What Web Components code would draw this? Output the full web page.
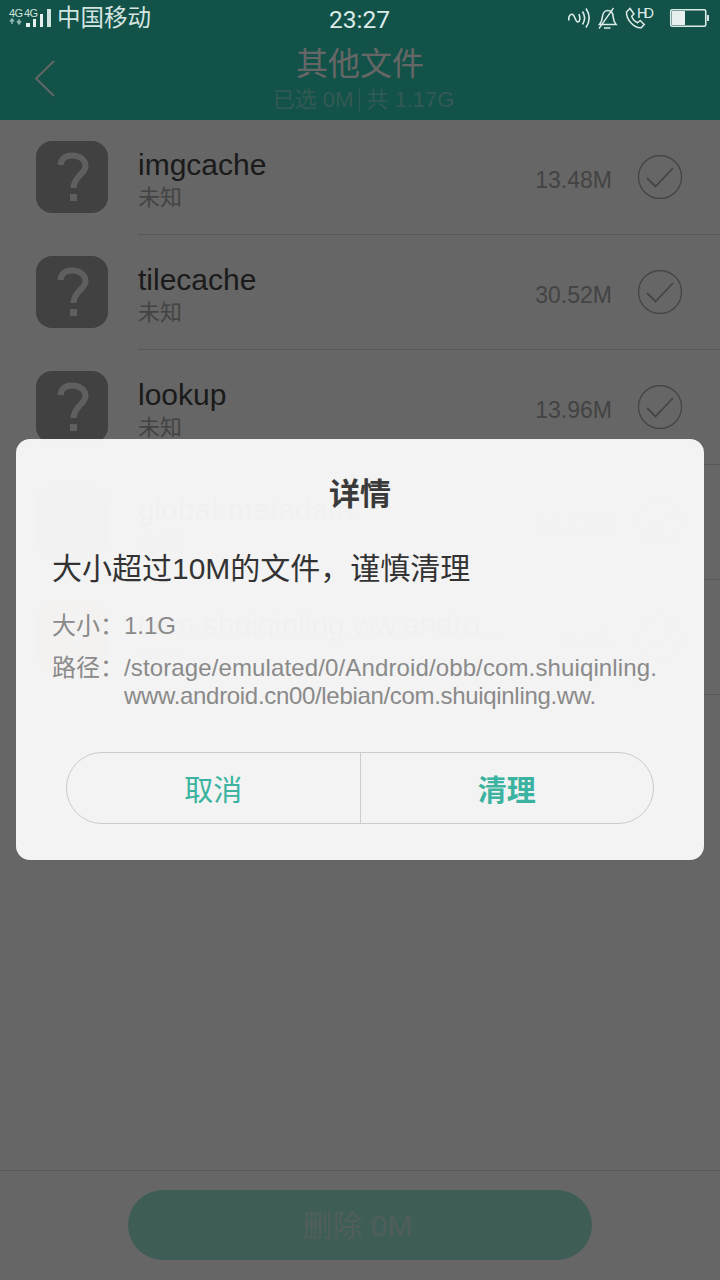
<!DOCTYPE html>
<html lang="zh">
<head>
<meta charset="utf-8">
<title>其他文件</title>
<style>
    html, body { margin: 0; padding: 0; background: #fff; }
</style>
</head>
<body>
<file-screen>
    <file-row name="imgcache" kind="未知" size="13.48M"></file-row>
    <file-row name="tilecache" kind="未知" size="30.52M"></file-row>
    <file-row name="lookup" kind="未知" size="13.96M"></file-row>
    <file-row name="global-metadata" kind="未知" size="10.12M"></file-row>
    <file-row name="com.shuiqinling.ww.andro..." kind="未知" size="1.1G" tone="orange"></file-row>
</file-screen>

<script>
const FONT = `"Liberation Sans", "Noto Sans CJK SC", sans-serif`;

class statusBar extends HTMLElement {
    constructor() {
        super();
        this.attachShadow({ mode: 'open' });
    }

    connectedCallback() {
        this.shadowRoot.innerHTML = `
        <style>
        :host {
            display: flex;
            align-items: center;
            justify-content: space-between;
            height: 36px;
            padding: 0 10px 0 9px;
            box-sizing: border-box;
            color: #d4e4e1;
            font-family: ${FONT};
        }
        .left, .right { display: flex; align-items: center; width: 220px; }
        .right { justify-content: flex-end; }
        .signal { display: block; margin-right: 5px; }
        .signal text { font-size: 11px; fill: #cfe2de; }
        .carrier { font-size: 23.5px; line-height: 36px; }
        .time { font-size: 24.5px; color: #dcebe8; padding-top: 4px; line-height: 38px; font-family: Roboto, sans-serif; }
        svg { display: block; }
        .hd { font-size: 14.5px; fill: #dcebe8; }
        </style>
        <div class="left">
            <svg class="signal" width="43" height="36" viewBox="0 0 43 36">
                <text x="0" y="16.500" textLength="14">4G</text>
                <text x="15" y="16.500" textLength="14">4G</text>
                <path d="M3 24v-4M1 21.500L3 19l2 2.500M10 19v4M8 21l2 3 2-3" fill="none" stroke="#8fb8b0" stroke-width="1.500"/>
                <rect x="17" y="23" width="4" height="4" fill="#e6f0ee"/>
                <rect x="24" y="19" width="3" height="8" fill="#e6f0ee"/>
                <rect x="31" y="14" width="3" height="13" fill="#e6f0ee"/>
                <rect x="38" y="9" width="4" height="18" fill="#cfe2de"/>
            </svg>
            <span class="carrier">中国移动</span>
        </div>
        <span class="time">23:27</span>
        <div class="right">
            <svg width="142" height="36" viewBox="568 0 142 36" fill="none" stroke="#dcebe8" stroke-width="1.600">
                <path d="M569 20.500c-1-4 1.500-7 3.700-6 2.300 1 2.800 7.500 5 7.500 2.200 0 2.800-3.500 1.300-8"/>
                <path d="M582.500 11.500c2.600 4 2.600 9 0 13M586 8.500c4 6 4 13 0 19"/>
                <path d="M599.500 24.500c2-2.500 2.600-4 2.900-7.500.3-4 2.700-6.500 5.300-6.500 3.700 0 5.300 3 5.500 6.500.2 3.500.8 5 2.800 7.500z"/>
                <path d="M604 28h6.500M599 28.500l14.500-20.500" stroke-width="1.300"/>
                <path d="M626.500 12l3.500-3.500 4 5.500-2.300 2.200c1 3 3 5.200 6 6.500l2.500-2.200 4 4-3 3.200c-7 .8-15-8-14.700-15.700z" stroke-width="1.500"/>
                <text class="hd" x="637" y="17.500" textLength="17" stroke="none">HD</text>
                <rect x="670.750" y="9.750" width="35" height="16.500" rx="1.500"/>
                <rect x="672" y="11" width="13" height="14" fill="#e8f0ef" stroke="none"/>
                <rect x="707" y="15" width="2" height="6" fill="#cfe2de" stroke="none"/>
            </svg>
        </div>
        `;
    }
}

class titleBar extends HTMLElement {
    constructor() {
        super();
        this.attachShadow({ mode: 'open' });
    }

    connectedCallback() {
        this.shadowRoot.innerHTML = `
        <style>
        :host {
            display: flex;
            flex-direction: column;
            align-items: center;
            position: relative;
            height: 120px;
            padding-top: 43px;
            box-sizing: border-box;
            background: #2dcdb4;
            color: #fff;
            font-family: ${FONT};
        }
        .back { position: absolute; left: 33px; top: 58px; }
        .title { font-size: 32px; line-height: 42px; }
        .sub { font-size: 22px; line-height: 30px; padding-left: 7px; color: rgba(255, 255, 255, .4); display: flex; align-items: center; }
        .sep { width: 1px; height: 22px; background: rgba(255, 255, 255, .4); margin: 0 6px; }
        </style>
        <svg class="back" width="24" height="42" viewBox="0 0 24 42" fill="none" stroke="#fff" stroke-width="1.800">
            <path d="M21 3L3 20.500 21 38"/>
        </svg>
        <div class="title">其他文件</div>
        <div class="sub"><span>已选 0M</span><i class="sep"></i><span>共 1.17G</span></div>
        `;
    }
}

class fileRow extends HTMLElement {
    constructor() {
        super();
        this.attachShadow({ mode: 'open' });
    }

    connectedCallback() {
        const name = this.getAttribute('name');
        const kind = this.getAttribute('kind');
        const size = this.getAttribute('size');
        const iconColor = this.getAttribute('tone') === 'orange' ? '#f0b070' : '#a3a3a3';

        this.shadowRoot.innerHTML = `
        <style>
        :host {
            display: flex;
            align-items: center;
            height: 115px;
            padding-left: 36px;
            box-sizing: border-box;
            font-family: ${FONT};
        }
        .icon {
            flex: none;
            display: flex;
            align-items: center;
            justify-content: center;
            width: 72px;
            height: 72px;
            margin: 0 30px 1px 0;
            border-radius: 16px;
            background: ${iconColor};
        }
        .body {
            flex: 1;
            display: flex;
            align-items: center;
            align-self: stretch;
            padding-right: 38px;
            border-bottom: 1px solid #d9d9d9;
        }
        .text { flex: 1; padding-top: 3px; }
        .name { font-size: 30px; line-height: 38px; color: #444; }
        .kind { font-size: 22px; line-height: 28px; color: #a9a9a9; }
        .size { font-size: 23px; color: #a9a9a9; margin: 6px 26px 0 0; }
        </style>
        <div class="icon">
            <svg width="34" height="50" viewBox="0 0 34 50" fill="none">
                <path d="M5.500 13C6 6.500 10.500 3.500 17 3.500c8 0 13.500 4.500 13.500 10.500 0 8-11.500 10-12 22" stroke="#eee" stroke-width="6"/>
                <rect x="15" y="42" width="7" height="7" fill="#eee"/>
            </svg>
        </div>
        <div class="body">
            <div class="text">
                <div class="name">${name}</div>
                <div class="kind">${kind}</div>
            </div>
            <span class="size">${size}</span>
            <svg width="44" height="44" viewBox="0 0 44 44" fill="none" stroke="#aaa" stroke-width="1.300">
                <circle cx="22" cy="22" r="21.500"/>
                <path d="M9 23l8.500 8.500L35 13" stroke-width="1.800"/>
            </svg>
        </div>
        `;
    }
}

class deleteBar extends HTMLElement {
    constructor() {
        super();
        this.attachShadow({ mode: 'open' });
    }

    connectedCallback() {
        this.shadowRoot.innerHTML = `
        <style>
        :host {
            display: block;
            padding: 19px 128px 20px;
            border-top: 1px solid #d9d9d9;
            font-family: ${FONT};
        }
        button {
            display: block;
            width: 100%;
            height: 70px;
            padding: 0 5px 4px 0;
            border: none;
            border-radius: 35px;
            background: #9be8d9;
            color: #c8ece4;
            font: inherit;
            font-size: 30px;
        }
        </style>
        <button>删除 0M</button>
        `;
    }
}

class detailDialog extends HTMLElement {
    constructor() {
        super();
        this.attachShadow({ mode: 'open' });
    }

    connectedCallback() {
        this.shadowRoot.innerHTML = `
        <style>
        :host {
            display: block;
            height: 421px;
            padding-top: 34px;
            box-sizing: border-box;
            border-radius: 14px;
            background: rgba(248, 248, 248, .97);
            font-family: ${FONT};
        }
        h2 {
            margin: 0 0 31px;
            font-size: 31px;
            line-height: 44px;
            font-weight: 700;
            text-align: center;
            color: #3a3a3a;
        }
        .lead { margin: 0 36px 22px; font-size: 30px; line-height: 42px; color: #333; }
        .info {
            display: grid;
            grid-template-columns: 72px 1fr;
            margin: 0 36px;
            row-gap: 14px;
            font-size: 24px;
            line-height: 28px;
            color: #8a8a8a;
        }
        .line { display: block; white-space: nowrap; }
        .wide { letter-spacing: .125px; }
        .tight { letter-spacing: -.32px; }
        .actions {
            display: flex;
            height: 72px;
            margin: 42px 50px 0;
            box-sizing: border-box;
            border: 1px solid #ccc;
            border-radius: 36px;
        }
        .actions span {
            flex: 1;
            display: flex;
            align-items: center;
            justify-content: center;
            font-size: 29px;
            color: #3bb3a0;
        }
        .actions span + span { border-left: 1px solid #ccc; font-weight: 700; }
        </style>
        <h2>详情</h2>
        <p class="lead">大小超过10M的文件，谨慎清理</p>
        <div class="info">
            <span>大小：</span><span>1.1G</span>
            <span>路径：</span>
            <span>
                <span class="line wide">/storage/emulated/0/Android/obb/com.shuiqinling.</span>
                <span class="line tight">www.android.cn00/lebian/com.shuiqinling.ww.</span>
            </span>
        </div>
        <div class="actions"><span>取消</span><span>清理</span></div>
        `;
    }
}

class fileScreen extends HTMLElement {
    constructor() {
        super();
        this.attachShadow({ mode: 'open' });
    }

    connectedCallback() {
        this.shadowRoot.innerHTML = `
        <style>
        :host {
            display: flex;
            flex-direction: column;
            position: relative;
            width: 720px;
            height: 1280px;
            overflow: hidden;
            background: #fff;
        }
        .list { flex: 1; }
        .scrim {
            position: absolute;
            inset: 0;
            padding: 439px 16px 0;
            background: rgba(0, 0, 0, .6);
        }
        status-bar { position: absolute; top: 0; left: 0; right: 0; }
        </style>
        <title-bar></title-bar>
        <div class="list"><slot></slot></div>
        <delete-bar></delete-bar>
        <div class="scrim"><detail-dialog></detail-dialog></div>
        <status-bar></status-bar>
        `;
    }
}

customElements.define('status-bar', statusBar);
customElements.define('title-bar', titleBar);
customElements.define('file-row', fileRow);
customElements.define('delete-bar', deleteBar);
customElements.define('detail-dialog', detailDialog);
customElements.define('file-screen', fileScreen);
</script>
</body>
</html>
